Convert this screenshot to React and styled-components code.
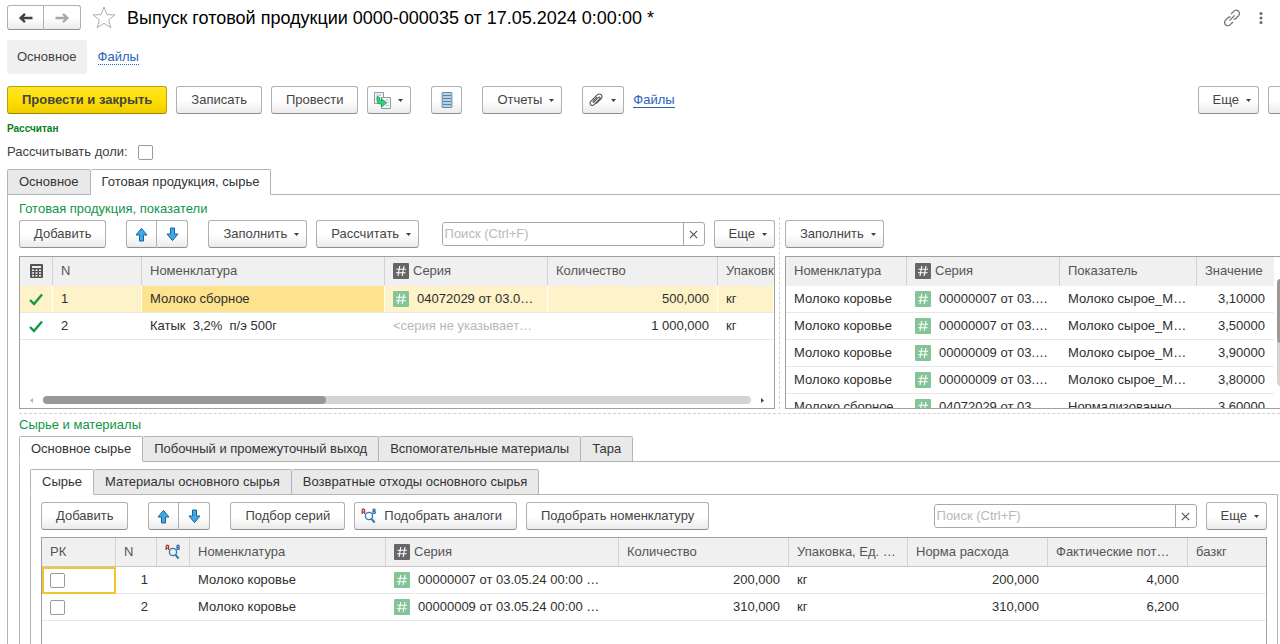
import React from "react";
import styled, { createGlobalStyle, css } from "styled-components";

const GlobalStyle = createGlobalStyle`
  * {
    box-sizing: border-box;
  }

  body {
    margin: 0;
    background: #fff;
    color: #404040;
    font-family: "Liberation Sans", Arial, sans-serif;
    font-size: 13px;
    line-height: 16px;
    overflow: hidden;
  }

  button,
  input {
    font: inherit;
    color: inherit;
  }
`;

/* ---------- icons ---------- */

const ArrowIcon = ({ back }) => (
  <svg width="16" height="12" viewBox="0 0 16 12" aria-hidden="true">
    <path
      d={back ? "M14.5 6H3M7 1.8L2.6 6L7 10.2" : "M1.5 6H13M9 1.8L13.4 6L9 10.2"}
      fill="none"
      stroke={back ? "#404040" : "#a8a8a8"}
      strokeWidth="2.4"
    />
  </svg>
);

const StarIcon = () => (
  <svg width="24" height="23" viewBox="0 0 24 23" aria-hidden="true">
    <path
      d="M12 1L14.9 8.6L23 8.9L16.6 13.9L18.9 21.8L12 17.3L5.1 21.8L7.4 13.9L1 8.9L9.1 8.6Z"
      fill="#fff"
      stroke="#a9aeb3"
      strokeWidth="1"
    />
  </svg>
);

const LinkIcon = () => (
  <svg width="18" height="18" viewBox="0 0 18 18" fill="none" stroke="#707070" strokeWidth="1.3" aria-hidden="true">
    <path d="M8 5L10.8 2.4A3 3 0 0 1 15.6 6.6L12.8 9.4Q11.6 10.4 10.4 10" />
    <path d="M10 13L7.2 15.6A3 3 0 0 1 2.4 11.4L5.2 8.6Q6.4 7.6 7.6 8" />
    <path d="M6.4 11.6L11.6 6.4" />
  </svg>
);

const DotsIcon = () => (
  <svg width="4" height="12" viewBox="0 0 4 12" fill="#6a6a6a" aria-hidden="true">
    <circle cx="2" cy="1.6" r="1.5" />
    <circle cx="2" cy="6" r="1.5" />
    <circle cx="2" cy="10.4" r="1.5" />
  </svg>
);

const Caret = () => (
  <svg width="5" height="3" viewBox="0 0 5 3" aria-hidden="true">
    <path d="M0 0H5L2.5 3Z" fill="#404040" />
  </svg>
);

const CreateFromIcon = () => (
  <svg width="17" height="17" viewBox="0 0 17 17" aria-hidden="true">
    <path d="M.5 .5H9.5V11.5H.5Z" fill="#f4f7fa" stroke="#8b9cab" />
    <path d="M2.5 3H7.5" stroke="#a9b7c2" />
    <path d="M7.5 5.5H16.5V16.5H7.5Z" fill="#f4f7fa" stroke="#8b9cab" />
    <path d="M12 8H14.5M13.5 10.5H14.5M12 13.5H14.5" stroke="#a9b7c2" />
    <path d="M3 4.4V8.6Q3 12 6.4 12H7.4V15L12.8 10.8L7.4 6.8V9H6.8Q5.8 9 5.8 8V5.6Z" fill="#34d178" stroke="#159a4c" strokeWidth=".8" />
  </svg>
);

const RegisterIcon = () => (
  <svg width="12" height="16" viewBox="0 0 12 16" aria-hidden="true">
    {[0, 3, 6, 9, 12].map((y) => (
      <rect key={y} x="1" y={y + 0.5} width="10" height="3" rx="1" fill="#b3d0e4" stroke="#5b7f9c" strokeWidth=".9" />
    ))}
  </svg>
);

const ClipIcon = () => (
  <svg width="15" height="14" viewBox="0 0 15 14" fill="none" stroke="#555" strokeWidth="1.1" aria-hidden="true">
    <path d="M4.4 9.6L9.3 4.6Q10.3 3.8 10.9 4.5T10.6 6.1L5.4 11.4Q3.6 13.2 1.9 12Q.2 10.2 2 8.2L8.2 1.9Q10.2 .1 12.2 1.7Q13.8 3.6 12.2 5.6L7.2 10.7" />
    <path d="M4.4 9.6Q3.6 8.6 4.6 7.6L8.2 3.9" />
  </svg>
);

const MoveIcon = ({ down }) => (
  <svg width="13" height="15" viewBox="0 0 13 15" aria-hidden="true">
    <path
      d={
        down
          ? "M4.5 1H8.5V7H12L6.5 13.6L1 7H4.5Z"
          : "M4.5 14H8.5V8H12L6.5 1.4L1 8H4.5Z"
      }
      fill="#3ea9e8"
      stroke="#1c6295"
      strokeLinejoin="round"
    />
  </svg>
);

const AnalogsIcon = () => (
  <svg width="16" height="16" viewBox="0 0 16 16" fill="none" aria-hidden="true">
    <path d="M1.2 6V2.2Q1.2 1.2 2.4 1.2T3.6 2.2V6M1.2 4.2H3.6" stroke="#b3322e" strokeWidth="1.3" />
    <path d="M12 1.2V5.4H13.2Q14.4 5.3 14.4 4.4T13.2 3.3H12M13 3.3Q14.1 3.2 14.1 2.2T13 1.2H12" stroke="#2b6da8" strokeWidth="1.2" />
    <circle cx="8" cy="8" r="3.6" stroke="#2b78b5" strokeWidth="1.3" />
    <path d="M10.6 10.8L13.6 14.6" stroke="#2b78b5" strokeWidth="2" />
  </svg>
);

const CalcIcon = () => (
  <svg width="13" height="14" viewBox="0 0 13 14" aria-hidden="true">
    <rect width="13" height="14" rx="1" fill="#555" />
    <path
      d="M2 2H11V4H2ZM2 5.5H4V7H2ZM5.5 5.5H7.5V7H5.5ZM9 5.5H11V7H9ZM2 8.2H4V9.7H2ZM5.5 8.2H7.5V9.7H5.5ZM9 8.2H11V9.7H9ZM2 11H4V12.5H2ZM5.5 11H7.5V12.5H5.5ZM9 11H11V12.5H9Z"
      fill="#f1f1f1"
    />
  </svg>
);

const CheckIcon = () => (
  <svg width="14" height="13" viewBox="0 0 14 13" aria-hidden="true">
    <path d="M1 7L5 11L13 1.5" fill="none" stroke="#10984a" strokeWidth="2.4" />
  </svg>
);

const HashIcon = ({ green }) => (
  <svg width="16" height="16" viewBox="0 0 16 16" aria-hidden="true">
    <rect width="16" height="16" rx="1" fill={green ? "#84c597" : "#666"} />
    <path d="M6.8 3L5 13M11 3L9.2 13M3.4 6.2H13M3 9.8H12.6" stroke="#fff" strokeWidth="1.1" />
  </svg>
);

const Triangle = ({ d, fill }) => (
  <svg width="5" height="5" viewBox="0 0 5 5" aria-hidden="true">
    <path d={d} fill={fill} />
  </svg>
);

/* ---------- small building blocks ---------- */

const Button = styled.button`
  display: inline-flex;
  align-items: center;
  justify-content: center;
  flex: none;
  gap: 7px;
  height: 28px;
  padding: 0 ${(p) => (p.$menu ? "7px" : "14px")} 0 ${(p) => (p.$icon ? "6px" : "14px")};
  border: 1px solid #b0b0b0;
  border-bottom-color: #8f8f8f;
  border-radius: 3px;
  background: linear-gradient(#fff 50%, #ebebeb);
  color: #444;
  white-space: nowrap;

  ${(p) =>
    p.$primary &&
    css`
      border-color: #bfa100;
      border-bottom-color: #9c8400;
      background: linear-gradient(#ffe52e, #ffdf00 50%, #efcd00);
      font-weight: bold;
    `}
`;

const Group = styled.div`
  display: flex;
  flex: none;
  margin: 0 ${(p) => (p.$wide ? "11px" : "0")};

  button {
    width: ${(p) => p.$cell}px;
    height: ${(p) => p.$height}px;
    padding: 0;
  }

  button:not(:last-child) {
    border-radius: 3px 0 0 3px;
  }

  button:not(:first-child) {
    border-left: 0;
    border-radius: 0 3px 3px 0;
  }
`;

const Toolbar = styled.div`
  display: flex;
  align-items: center;
  gap: 9px;
  height: 28px;
`;

const Spacer = styled.span`
  flex: ${(p) => (p.$size ? `0 0 ${p.$size}px` : "1")};
`;

const SearchBox = styled.div`
  display: flex;
  flex: 0 1 263px;
  min-width: 0;
  height: 24px;
  border: 1px solid #a8a8a8;
  border-radius: 3px;

  input {
    flex: 1;
    min-width: 0;
    padding: 0 2px;
    border: 0;
    border-radius: 3px;
    outline: 0;
    background: #fff;
  }

  input::placeholder {
    color: #b8b8b8;
    opacity: 1;
  }

  button {
    display: flex;
    align-items: center;
    justify-content: center;
    flex: 0 0 21px;
    padding: 0;
    border: 0;
    border-left: 1px solid #a8a8a8;
    background: none;
  }
`;

const Checkbox = styled.input.attrs({ type: "checkbox" })`
  appearance: none;
  display: block;
  flex: none;
  width: 15px;
  height: 15px;
  margin: 0;
  border: 1px solid #9a9a9a;
  border-radius: 2px;
  background: #fff;
`;

const Search = () => (
  <SearchBox>
    <input type="text" aria-label="Поиск" placeholder="Поиск (Ctrl+F)" />
    <button type="button" aria-label="Очистить">
      <svg width="9" height="9" viewBox="0 0 9 9" aria-hidden="true">
        <path d="M.8 .8L8.2 8.2M8.2 .8L.8 8.2" stroke="#555" strokeWidth="1.2" />
      </svg>
    </button>
  </SearchBox>
);

const MenuButton = ({ children, icon, label }) => (
  <Button type="button" $menu $icon={icon} aria-label={label}>
    {children}
    <Caret />
  </Button>
);

const MoveButtons = () => (
  <Group $wide $cell={31} $height={28}>
    <Button type="button" aria-label="Переместить вверх">
      <MoveIcon />
    </Button>
    <Button type="button" aria-label="Переместить вниз">
      <MoveIcon down />
    </Button>
  </Group>
);

/* ---------- page ---------- */

const Page = styled.div`
  display: flex;
  flex-direction: column;
  height: 100vh;
  padding: 5px 0 0 7px;
  overflow: hidden;
`;

const TitleBar = styled.header`
  display: flex;
  align-items: center;
  gap: 11px;
  height: 25px;
  padding-right: 10px;

  h1 {
    margin: 0;
    color: #000;
    font-size: 18px;
    font-weight: normal;
    line-height: 24px;
    white-space: nowrap;
  }
`;

const PlainButton = styled.button`
  display: flex;
  align-items: center;
  justify-content: center;
  min-width: 18px;
  padding: 0;
  border: 0;
  background: none;
`;

const Sections = styled.nav`
  display: flex;
  align-items: center;
  gap: 11px;
  margin-top: 10px;

  span {
    padding: 9px 10px;
    border-radius: 3px;
    background: #f0f0f0;
  }
`;

const Link = styled.a`
  color: #2a62b8;
  line-height: 14px;
  text-decoration: none;
  border-bottom: 1px ${(p) => (p.$dotted ? "dotted" : "solid")} #2a62b8;
`;

const CommandBar = styled(Toolbar)`
  margin-top: 12px;
  margin-right: -18px;
`;

const Status = styled.div`
  margin-top: 7px;
  color: #0a7d1c;
  font-size: 10px;
  font-weight: bold;
`;

const ShareRow = styled.label`
  display: flex;
  align-items: center;
  align-self: flex-start;
  gap: 10px;
  margin-top: 7px;
`;

const TabList = styled.div`
  display: flex;
  flex: none;
  height: 26px;
`;

const Tab = styled.button`
  padding: 0 11px;
  border: 1px solid #b4b4b4;
  border-left-width: ${(p) => (p.$first ? "1px" : "0")};
  border-bottom-color: ${(p) => (p.$active ? "#fff" : "#b4b4b4")};
  border-radius: 2px 2px 0 0;
  background: ${(p) => (p.$active ? "#fff" : "#e9e9e9")};
  color: #333;
  white-space: nowrap;
`;

const TabFill = styled.div`
  flex: 1;
  border-bottom: 1px solid #b4b4b4;
`;

const TabPanel = styled.div`
  display: flex;
  flex: 1;
  flex-direction: column;
  min-height: 0;
  padding: ${(p) => p.$pad};
  border-left: 1px solid #b4b4b4;
  border-right: ${(p) => (p.$closed ? "1px solid #b4b4b4" : "0")};
`;

const Tabs = ({ items, active }) => (
  <TabList role="tablist">
    {items.map((name, i) => (
      <Tab key={name} type="button" role="tab" aria-selected={i === active} $first={i === 0} $active={i === active}>
        {name}
      </Tab>
    ))}
    <TabFill />
  </TabList>
);

const GroupTitle = styled.h2`
  margin: 0;
  color: #0f9549;
  font-size: 13px;
  font-weight: normal;
  line-height: 16px;
`;

const Split = styled.div`
  display: grid;
  flex: none;
  grid-template-columns: minmax(0, 756fr) minmax(0, 496fr);
  gap: 9px;
  padding-bottom: 4px;
  border-bottom: 1px dashed #d0d0d0;
`;

const SplitPane = styled.div`
  display: flex;
  flex-direction: column;
  gap: 8px;
  padding-top: 3px;

  & + & {
    margin-left: -5px;
    padding-left: 5px;
    border-left: 1px dashed #d0d0d0;
  }
`;

const GridBox = styled.div`
  display: flex;
  flex-direction: ${(p) => (p.$row ? "row" : "column")};
  height: ${(p) => p.$height};
  flex: ${(p) => (p.$grow ? "1" : "none")};
  min-height: 0;
  border: 1px solid #a0a0a0;
  border-right-width: ${(p) => (p.$row ? "0" : "1px")};
  border-bottom-width: ${(p) => (p.$grow ? "0" : "1px")};
  overflow: hidden;
`;

const Table = styled.table`
  width: 100%;
  align-self: flex-start;
  border-collapse: separate;
  border-spacing: 0;
  table-layout: fixed;

  th,
  td {
    height: 27px;
    padding: 0 8px;
    border-bottom: 1px solid #e6e6e6;
    text-align: left;
    white-space: pre;
    overflow: hidden;
  }

  th {
    height: 29px;
    border-right: 1px solid #d2d2d2;
    border-bottom-color: ${(p) => (p.$lined ? "#c8c8c8" : "#f0f0f0")};
    background: #f0f0f0;
    color: #555;
    font-weight: normal;
  }

  th:last-child {
    border-right: 0;
  }

  td {
    border-right: 1px solid transparent;
    color: #2e2e2e;
  }
`;

const Row = styled.tr`
  td {
    background: ${(p) => (p.$selected ? "#fdf2c8" : "#fff")};
    border-right-color: #fff;
  }
`;

const Cell = styled.td`
  && {
    text-align: ${(p) => p.$align || "left"};
    ${(p) => p.$current && "background: #fde38e;"}
    ${(p) => p.$muted && "color: #b8b8b8;"}
    ${(p) => p.$focus && "outline: 2px solid #f0c52e; outline-offset: -2px;"}
  }
`;

const IconText = styled.span`
  display: flex;
  align-items: center;
  justify-content: ${(p) => (p.$gap ? "flex-start" : "center")};
  gap: ${(p) => p.$gap || 0}px;
`;

const HScroll = styled.div`
  display: flex;
  align-items: center;
  gap: 9px;
  margin-top: auto;
  padding: 0 9px 4px;

  div {
    flex: 1;
    height: 8px;
    border-radius: 4px;
    background: #d4d4d4;
  }

  span {
    display: block;
    width: 40%;
    height: 8px;
    border-radius: 4px;
    background: #999;
  }
`;

const VScroll = styled.div`
  flex: 0 0 6px;
  padding: 22px 0 0 3px;
  overflow: hidden;

  div {
    width: 8px;
    height: 107px;
    border-radius: 4px;
    background: #d4d4d4;
  }

  span {
    display: block;
    height: 64px;
    border-radius: 4px;
    background: #999;
  }
`;

const SeriesHead = () => (
  <IconText $gap={4}>
    <HashIcon />
    Серия
  </IconText>
);

const Series = ({ children }) => (
  <IconText $gap={8}>
    <HashIcon green />
    {children}
  </IconText>
);

const indicators = [
  ["Молоко коровье", "00000007 от 03.…", "Молоко сырое_М…", "3,10000"],
  ["Молоко коровье", "00000007 от 03.…", "Молоко сырое_М…", "3,50000"],
  ["Молоко коровье", "00000009 от 03.…", "Молоко сырое_М…", "3,90000"],
  ["Молоко коровье", "00000009 от 03.…", "Молоко сырое_М…", "3,80000"],
  ["Молоко сборное", "04072029 от 03.…", "Нормализованно…", "3,60000"],
];

const materials = [
  ["1", "00000007 от 03.05.24 00:00 …", "200,000", "4,000"],
  ["2", "00000009 от 03.05.24 00:00 …", "310,000", "6,200"],
];

const Columns = ({ widths }) => (
  <colgroup>
    {widths.map((w, i) => (
      <col key={i} width={w} />
    ))}
  </colgroup>
);

const ProductsTable = () => (
  <GridBox $height="153px">
    <Table>
      <Columns widths={[33, 89, 243, 163, 170, undefined]} />
      <thead>
        <tr>
          <th aria-label="Рассчитан">
            <IconText>
              <CalcIcon />
            </IconText>
          </th>
          <th>N</th>
          <th>Номенклатура</th>
          <th>
            <SeriesHead />
          </th>
          <th>Количество</th>
          <th>Упаковка</th>
        </tr>
      </thead>
      <tbody>
        <Row $selected>
          <Cell>
            <IconText>
              <CheckIcon />
            </IconText>
          </Cell>
          <Cell>1</Cell>
          <Cell $current>Молоко сборное</Cell>
          <Cell>
            <Series>04072029 от 03.0…</Series>
          </Cell>
          <Cell $align="right">500,000</Cell>
          <Cell>кг</Cell>
        </Row>
        <Row>
          <Cell>
            <IconText>
              <CheckIcon />
            </IconText>
          </Cell>
          <Cell>2</Cell>
          <Cell>{"Катык  3,2%  п/э 500г"}</Cell>
          <Cell $muted>{"<серия не указывает…"}</Cell>
          <Cell $align="right">1 000,000</Cell>
          <Cell>кг</Cell>
        </Row>
      </tbody>
    </Table>
    <HScroll>
      <Triangle d="M4 0V5L1 2.5Z" fill="#b0b0b0" />
      <div>
        <span />
      </div>
      <Triangle d="M1 0V5L4 2.5Z" fill="#444" />
    </HScroll>
  </GridBox>
);

const IndicatorsTable = () => (
  <GridBox $row $height="153px">
    <Table>
      <Columns widths={[121, 153, 137, undefined]} />
      <thead>
        <tr>
          <th>Номенклатура</th>
          <th>
            <SeriesHead />
          </th>
          <th>Показатель</th>
          <th>Значение</th>
        </tr>
      </thead>
      <tbody>
        {indicators.map(([item, series, name, value], i) => (
          <Row key={i}>
            <Cell>{item}</Cell>
            <Cell>
              <Series>{series}</Series>
            </Cell>
            <Cell>{name}</Cell>
            <Cell $align="right">{value}</Cell>
          </Row>
        ))}
      </tbody>
    </Table>
    <VScroll>
      <div>
        <span />
      </div>
    </VScroll>
  </GridBox>
);

const MaterialsTable = () => (
  <GridBox $grow>
    <Table $lined>
      <Columns widths={[74, 41, 33, 196, 233, 170, 119, 140, 140, undefined]} />
      <thead>
        <tr>
          <th>РК</th>
          <th>N</th>
          <th aria-label="Аналоги">
            <IconText>
              <AnalogsIcon />
            </IconText>
          </th>
          <th>Номенклатура</th>
          <th>
            <SeriesHead />
          </th>
          <th>Количество</th>
          <th>Упаковка, Ед. …</th>
          <th>Норма расхода</th>
          <th>Фактические пот…</th>
          <th>базкг</th>
        </tr>
      </thead>
      <tbody>
        {materials.map(([n, series, amount, loss], i) => (
          <Row key={n}>
            <Cell $focus={i === 0}>
              <Checkbox aria-label={`РК, строка ${n}`} />
            </Cell>
            <Cell $align="right">{n}</Cell>
            <Cell />
            <Cell>Молоко коровье</Cell>
            <Cell>
              <Series>{series}</Series>
            </Cell>
            <Cell $align="right">{amount}</Cell>
            <Cell>кг</Cell>
            <Cell $align="right">{amount}</Cell>
            <Cell $align="right">{loss}</Cell>
            <Cell />
          </Row>
        ))}
      </tbody>
    </Table>
  </GridBox>
);

const App = () => (
  <Page>
    <GlobalStyle />
    <TitleBar>
      <Group $cell={37} $height={25}>
        <Button type="button" aria-label="Назад">
          <ArrowIcon back />
        </Button>
        <Button type="button" aria-label="Вперед">
          <ArrowIcon />
        </Button>
      </Group>
      <PlainButton type="button" aria-label="В избранное">
        <StarIcon />
      </PlainButton>
      <h1>Выпуск готовой продукции 0000-000035 от 17.05.2024 0:00:00 *</h1>
      <Spacer />
      <PlainButton type="button" aria-label="Получить ссылку">
        <LinkIcon />
      </PlainButton>
      <PlainButton type="button" aria-label="Дополнительно">
        <DotsIcon />
      </PlainButton>
    </TitleBar>

    <Sections>
      <span>Основное</span>
      <Link href="#files" $dotted>
        Файлы
      </Link>
    </Sections>

    <CommandBar>
      <Button type="button" $primary>
        Провести и закрыть
      </Button>
      <Button type="button">Записать</Button>
      <Button type="button">Провести</Button>
      <MenuButton icon label="Создать на основании">
        <CreateFromIcon />
      </MenuButton>
      <Group $wide $cell={31} $height={28}>
        <Button type="button" aria-label="Движения документа">
          <RegisterIcon />
        </Button>
      </Group>
      <MenuButton>Отчеты</MenuButton>
      <Spacer $size={2} />
      <MenuButton icon label="Присоединенные файлы">
        <ClipIcon />
      </MenuButton>
      <Link href="#attached">Файлы</Link>
      <Spacer />
      <MenuButton>Еще</MenuButton>
      <Button type="button" aria-label="Справка" />
    </CommandBar>

    <Status>Рассчитан</Status>
    <ShareRow>
      Рассчитывать доли:
      <Checkbox />
    </ShareRow>

    <Spacer $size={9} />
    <Tabs items={["Основное", "Готовая продукция, сырье"]} active={1} />
    <TabPanel $pad="6px 0 0 11px">
      <GroupTitle>Готовая продукция, показатели</GroupTitle>
      <Split>
        <SplitPane>
          <Toolbar>
            <Button type="button">Добавить</Button>
            <MoveButtons />
            <MenuButton>Заполнить</MenuButton>
            <MenuButton>Рассчитать</MenuButton>
            <Spacer />
            <Search />
            <MenuButton>Еще</MenuButton>
          </Toolbar>
          <ProductsTable />
        </SplitPane>
        <SplitPane>
          <Toolbar>
            <MenuButton>Заполнить</MenuButton>
          </Toolbar>
          <IndicatorsTable />
        </SplitPane>
      </Split>

      <Spacer $size={3} />
      <GroupTitle>Сырье и материалы</GroupTitle>
      <Spacer $size={3} />
      <Tabs
        items={["Основное сырье", "Побочный и промежуточный выход", "Вспомогательные материалы", "Тара"]}
        active={0}
      />
      <TabPanel $pad="7px 2px 0 10px">
        <Tabs items={["Сырье", "Материалы основного сырья", "Возвратные отходы основного сырья"]} active={0} />
        <TabPanel $closed $pad="7px 10px 0 10px">
          <Toolbar>
            <Button type="button">Добавить</Button>
            <MoveButtons />
            <Button type="button">Подбор серий</Button>
            <Button type="button" $icon>
              <AnalogsIcon />
              Подобрать аналоги
            </Button>
            <Button type="button">Подобрать номенклатуру</Button>
            <Spacer />
            <Search />
            <MenuButton>Еще</MenuButton>
          </Toolbar>
          <Spacer $size={7} />
          <MaterialsTable />
        </TabPanel>
      </TabPanel>
    </TabPanel>
  </Page>
);

export default App;
